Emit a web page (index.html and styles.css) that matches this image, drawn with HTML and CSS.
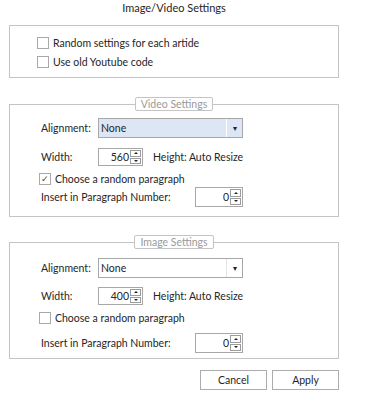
FILE: index.html
```html
<!DOCTYPE html>
<html lang="en">
<head>
    <meta charset="UTF-8">
    <meta name="viewport" content="width=device-width, initial-scale=1.0">
    <title>Image/Video Settings</title>
    <link rel="stylesheet" href="styles.css">
</head>
<body>

<div class="dialog">
    <div class="title">Image/Video Settings</div>

    <div class="box">
        <label class="check"><span class="checkbox"></span>Random settings for each artide</label>
        <label class="check"><span class="checkbox"></span>Use old Youtube code</label>
    </div>

    <fieldset class="group video">
        <legend>Video Settings</legend>
        <div class="group-body">
            <div class="row">
                <span class="label">Alignment:</span>
                <div class="select focused"><span class="value">None</span><span class="drop">&#9662;</span></div>
            </div>
            <div class="row width-row">
                <span class="label">Width:</span>
                <div class="spin"><span class="num">560</span><span class="arrows"><span class="up"></span><span class="down"></span></span></div>
                <span class="note">Height: Auto Resize</span>
            </div>
            <label class="check random"><span class="checkbox">&#10003;</span>Choose a random paragraph</label>
            <div class="row insert-row">
                <span class="label wide">Insert in Paragraph Number:</span>
                <div class="spin tall"><span class="num">0</span><span class="arrows"><span class="up"></span><span class="down"></span></span></div>
            </div>
        </div>
    </fieldset>

    <fieldset class="group image">
        <legend>Image Settings</legend>
        <div class="group-body">
            <div class="row">
                <span class="label">Alignment:</span>
                <div class="select"><span class="value">None</span><span class="drop">&#9662;</span></div>
            </div>
            <div class="row width-row">
                <span class="label">Width:</span>
                <div class="spin"><span class="num">400</span><span class="arrows"><span class="up"></span><span class="down"></span></span></div>
                <span class="note">Height: Auto Resize</span>
            </div>
            <label class="check random"><span class="checkbox"></span>Choose a random paragraph</label>
            <div class="row insert-row">
                <span class="label wide">Insert in Paragraph Number:</span>
                <div class="spin tall"><span class="num">0</span><span class="arrows"><span class="up"></span><span class="down"></span></span></div>
            </div>
        </div>
    </fieldset>

    <div class="buttons">
        <button>Cancel</button>
        <button>Apply</button>
    </div>
</div>

</body>
</html>
```

FILE: styles.css
```css
body {
    font-family: Lato, Roboto, sans-serif;
    font-size: 10.5px;
    color: #262626;
    background-color: #fff;
    margin: 0;
}
.dialog {
    width: 330px;
    margin-left: 9px;
}
.title {
    height: 15px;
    line-height: 15px;
    text-align: center;
    font-size: 11px;
    margin-bottom: 10px;
}
.box {
    border: 1px solid #c4c4c4;
    padding: 11px 0 9px 27px;
    display: flex;
    flex-direction: column;
    gap: 7px;
}
.check {
    display: flex;
    align-items: center;
    height: 12px;
    line-height: 12px;
}
.checkbox {
    width: 10px;
    height: 10px;
    border: 1px solid #a9a9a9;
    background: #fff;
    margin-right: 4px;
    font-size: 9px;
    line-height: 10px;
    text-align: center;
    color: #444;
}
.group {
    margin: 19px 0 0;
    padding: 7px 0 9px;
    border: 1px solid #c4c4c4;
    min-width: 0;
}
.group legend {
    margin: 0 auto;
    padding: 0 5px;
    height: 12px;
    line-height: 12px;
    border: 1px solid #c4c4c4;
    border-radius: 2px;
    color: #9a9a9a;
}
.group-body {
    padding-left: 31px;
}
.group.image {
    margin-top: 18px;
    padding-top: 9px;
    padding-bottom: 5px;
}
.row {
    display: flex;
    align-items: center;
}
.label {
    width: 57px;
}
.label.wide {
    width: 154px;
}
.select {
    width: 145px;
    height: 20px;
    box-sizing: border-box;
    border: 1px solid #a8a8a8;
    background: #fff;
    display: flex;
    align-items: center;
}
.select.focused {
    background: #dce6f4;
}
.select .value {
    flex: 1;
    padding-left: 2px;
}
.select .drop {
    width: 15px;
    height: 18px;
    line-height: 18px;
    text-align: center;
    font-size: 8px;
    border-left: 1px solid #e6e6e6;
    background: #fff;
}
.select.focused .drop {
    border-left-color: #fff;
    background: #dce6f4;
}
.spin {
    width: 45px;
    height: 18px;
    box-sizing: border-box;
    border: 1px solid #a8a8a8;
    display: flex;
}
.spin.tall {
    width: 48px;
    height: 20px;
}
.spin .num {
    flex: 1;
    text-align: right;
    padding-right: 1px;
    line-height: 16px;
}
.spin.tall .num {
    line-height: 18px;
}
.arrows {
    width: 11px;
    display: flex;
    flex-direction: column;
    padding: 1px 1px 1px 0;
    gap: 1px;
}
.arrows span {
    flex: 1;
    border: 1px solid #9c9c9c;
    display: flex;
    align-items: center;
    justify-content: center;
}
.arrows .up::before,
.arrows .down::before {
    content: "";
    border-left: 2px solid transparent;
    border-right: 2px solid transparent;
}
.arrows .up::before {
    border-bottom: 2px solid #222;
}
.arrows .down::before {
    border-top: 2px solid #222;
}
.note {
    margin-left: 10px;
}
.width-row {
    margin-top: 10px;
}
.random {
    margin-top: 7px;
    margin-left: -2px;
}
.insert-row {
    margin-top: 2px;
}
.image .width-row {
    margin-top: 9px;
}
.image .insert-row {
    margin-top: 9px;
}
.buttons {
    display: flex;
    justify-content: flex-end;
    gap: 5px;
    margin-top: 11px;
}
.buttons button {
    width: 67px;
    height: 20px;
    border: 1px solid #acacac;
    background: #fff;
    font-family: inherit;
    font-size: 10.5px;
    color: #262626;
    padding: 0;
}
```
